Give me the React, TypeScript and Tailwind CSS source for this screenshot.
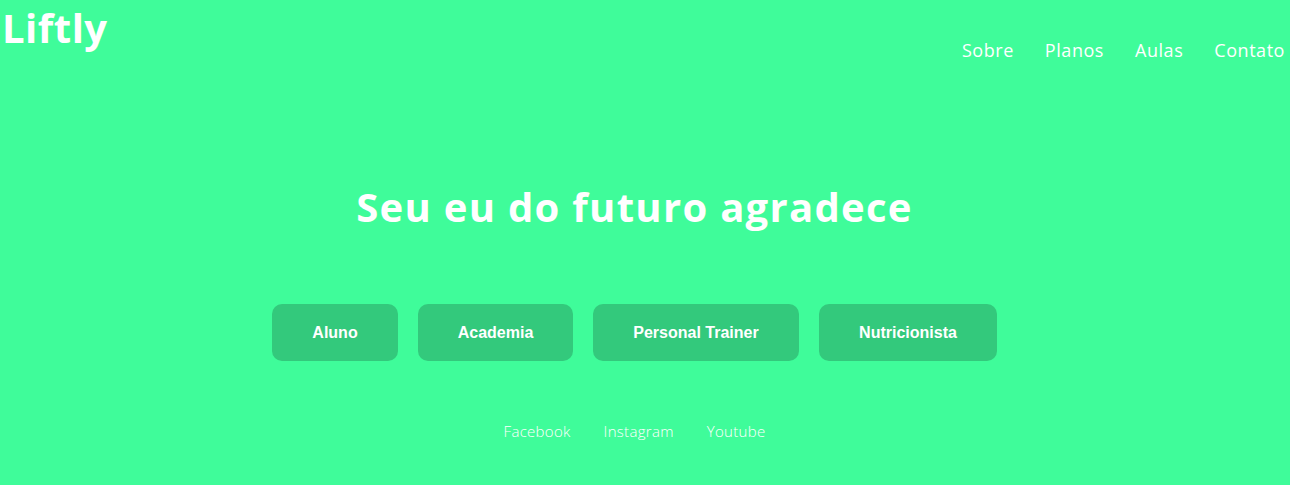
const navLinks = ["Sobre", "Planos", "Aulas", "Contato"];
const roles = [
  { label: "Aluno", w: "w-[126px]" },
  { label: "Academia", w: "w-[155px]" },
  { label: "Personal Trainer", w: "w-[206px]" },
  { label: "Nutricionista", w: "w-[178px]" },
];
const socials = ["Facebook", "Instagram", "Youtube"];

const App = () => {
  return (
    <div className="min-h-[485px] w-full bg-[#3ffc9a] text-white font-['Open_Sans',sans-serif]">
      <header className="flex items-start justify-between pl-[2px] pr-[5px]">
        <h1 className="text-[40px] font-bold leading-none pt-[8px] tracking-[0.5px]">
          Liftly
        </h1>
        <nav className="flex gap-[31px] pt-[38px]">
          {navLinks.map((link) => (
            <a key={link} href="#" className="text-[18px] leading-[24px] tracking-[0.55px]">
              {link}
            </a>
          ))}
        </nav>
      </header>

      <main className="flex flex-col items-center pr-[21px]">
        <h2 className="mt-[119px] text-[40px] font-bold leading-[52px] tracking-[1.3px]">
          Seu eu do futuro agradece
        </h2>

        <div className="mt-[71px] flex gap-[20px]">
          {roles.map((role) => (
            <button
              key={role.label}
              className={`${role.w} h-[57px] rounded-[10px] bg-[#33c97c] font-['Liberation_Sans',Arial,sans-serif] text-[16px] font-bold text-white`}
            >
              {role.label}
            </button>
          ))}
        </div>

        <div className="mt-[60px] flex gap-[33px]">
          {socials.map((s) => (
            <a key={s} href="#" className="text-[15px] font-light leading-[20px] tracking-[0.3px]">
              {s}
            </a>
          ))}
        </div>
      </main>
    </div>
  );
};

export default App;
